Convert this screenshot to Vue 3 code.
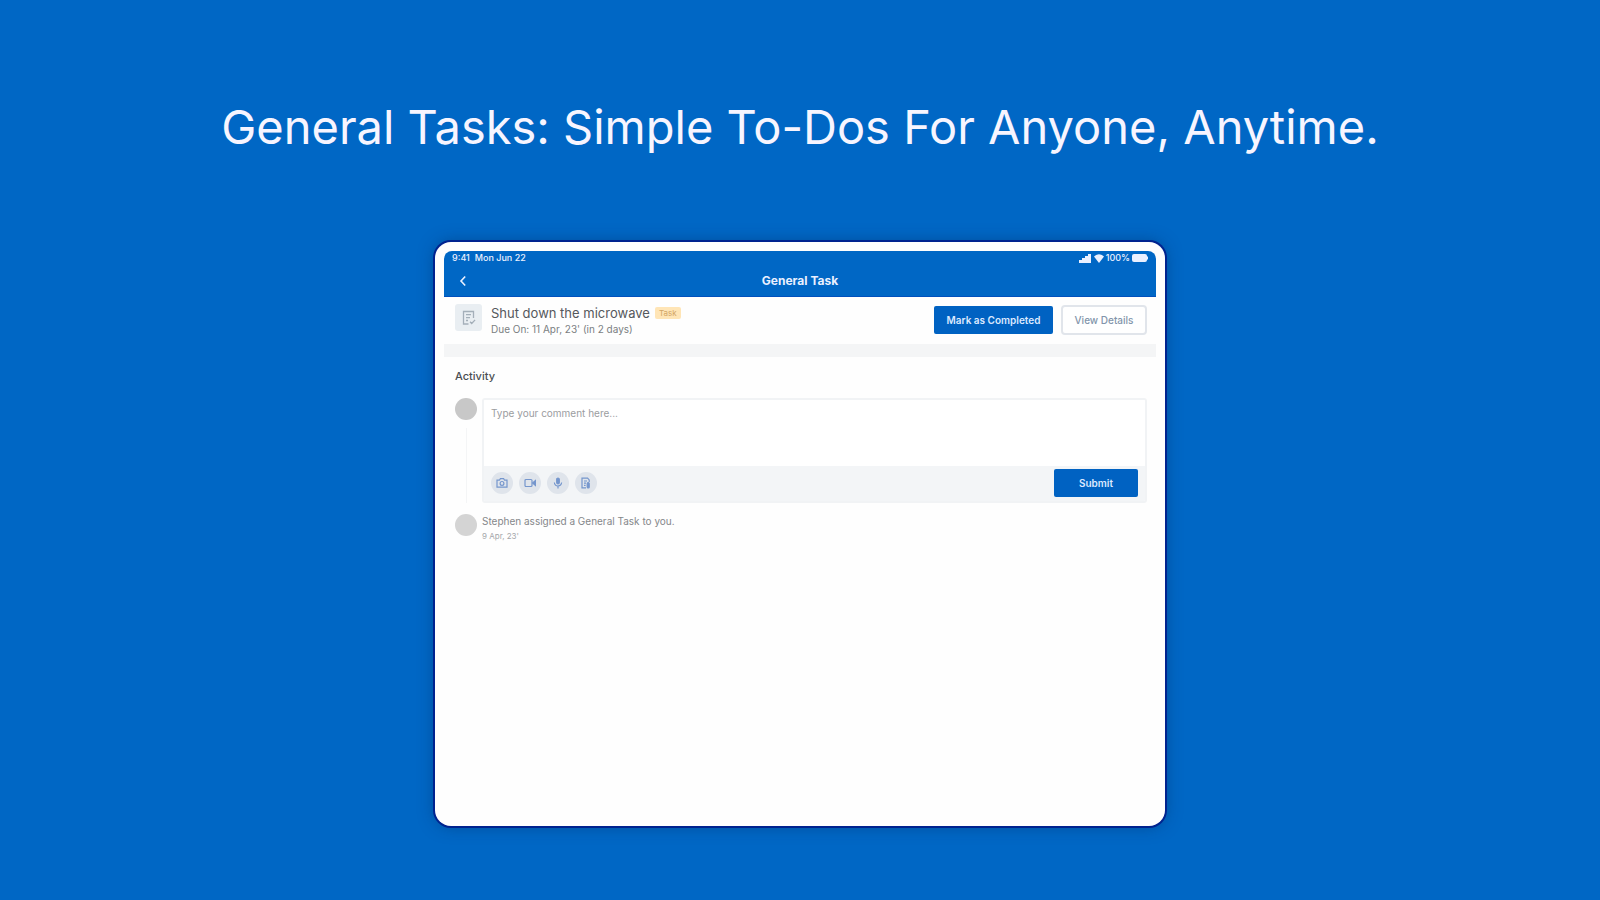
<script setup>
import { ref } from 'vue'

const comment = ref('')
const attachments = [
  { name: 'Add photo', icon: 'camera' },
  { name: 'Add video', icon: 'video' },
  { name: 'Record audio', icon: 'mic' },
  { name: 'Attach file', icon: 'file' },
]
</script>

<template>
  <main class="page">
    <h1 class="headline">General Tasks: Simple To-Dos For Anyone, Anytime.</h1>

    <section class="tablet">
      <div class="screen">
        <header class="top">
          <div class="status">
            <span class="status-left"><span>9:41</span><span>Mon Jun 22</span></span>
            <span class="status-right">
              <svg width="13" height="9" viewBox="0 0 13 9" fill="currentColor" aria-hidden="true">
                <path d="M0 6h3v3H0zM3 4h3v5H3zM6 2h3v7H6zM9 0h3v9H9z" />
              </svg>
              <svg width="10" height="9" viewBox="0 0 10 9" fill="currentColor" aria-hidden="true">
                <path d="M0 2.4Q5-2 10 2.4L5 9z" />
              </svg>
              <span>100%</span>
              <svg width="16" height="8" viewBox="0 0 16 8" fill="currentColor" aria-hidden="true">
                <rect width="15" height="8" rx="2" />
                <rect x="15" y="2.5" width="1" height="3" />
              </svg>
            </span>
          </div>
          <div class="nav">
            <button class="back" type="button" aria-label="Back">
              <svg width="8" height="12" viewBox="0 0 8 12" fill="none" stroke="currentColor" stroke-width="1.6" aria-hidden="true">
                <path d="M6.2 1.5 2 6l4.2 4.5" />
              </svg>
            </button>
            <h2>General Task</h2>
          </div>
        </header>

        <div class="task">
          <span class="task-icon">
            <svg width="14" height="16" viewBox="0 0 14 16" fill="none" stroke="currentColor" stroke-width="1.3" aria-hidden="true">
              <path d="M6.5 14H1.5V1.5h10V8M4 4.7h5M4 7.7h4M4 10.5h2M8 11.8l1.7 1.7 3.4-3.6" />
            </svg>
          </span>
          <div class="task-text">
            <div class="task-line">
              <h3>Shut down the microwave</h3>
              <span class="badge">Task</span>
            </div>
            <p>Due On: 11 Apr, 23' (in 2 days)</p>
          </div>
          <button class="primary complete" type="button">Mark as Completed</button>
          <button class="details" type="button">View Details</button>
        </div>

        <div class="activity">
          <h3>Activity</h3>
          <div class="entry">
            <span class="rail"><span class="avatar"></span><span class="line"></span></span>
            <form class="comment" @submit.prevent>
              <textarea v-model="comment" aria-label="Comment" placeholder="Type your comment here..."></textarea>
              <div class="tools">
                <button v-for="item in attachments" :key="item.icon" class="tool" type="button" :aria-label="item.name">
                  <svg width="12" height="12" viewBox="0 0 12 12" fill="none" stroke="currentColor" stroke-width="1.2" aria-hidden="true">
                    <g v-if="item.icon === 'camera'">
                      <path d="M1 3.2h2.4l1-1.6h3.2l1 1.6H11v7H1z" />
                      <circle cx="6" cy="6.4" r="1.9" />
                    </g>
                    <g v-else-if="item.icon === 'video'">
                      <rect x="1" y="2.5" width="7" height="7" rx="1" />
                      <path d="M8.6 6 11.4 3.6v4.8z" fill="currentColor" />
                    </g>
                    <g v-else-if="item.icon === 'mic'">
                      <rect x="4.7" y="1" width="2.6" height="5.8" rx="1.3" fill="currentColor" />
                      <path d="M2.4 5.6a3.6 3.4 0 0 0 7.2 0M6 9v2.4" />
                    </g>
                    <g v-else>
                      <path d="M6 10.8H2V1.2h5.6l1.6 1.7v2M4 4h3M4 6.2h2M4 8.4h1.6" />
                      <path d="M7.2 10V6.6q0-1 1-1t1 1v3.6q0 .8-1 .8t-1-1" fill="currentColor" />
                    </g>
                  </svg>
                </button>
                <button class="primary submit" type="submit">Submit</button>
              </div>
            </form>
          </div>
          <div class="entry log">
            <span class="avatar light"></span>
            <div>
              <p class="log-text">Stephen assigned a General Task to you.</p>
              <p class="log-date">9 Apr, 23'</p>
            </div>
          </div>
        </div>
      </div>
    </section>
  </main>
</template>

<style>
body {
  margin: 0;
  background: #0067c5;
}
</style>

<style scoped>
* {
  box-sizing: border-box;
}
.page {
  display: flex;
  flex-direction: column;
  align-items: center;
  min-height: 100vh;
  padding: 97px 24px 48px;
  background: #0067c5;
  font-family: Inter, "Liberation Sans", sans-serif;
}
h1, h2, h3, p {
  margin: 0;
}
button {
  padding: 0;
  border: 0;
  font: inherit;
  cursor: pointer;
}
.headline {
  color: #f7f5ff;
  font-size: 47px;
  font-weight: 400;
  line-height: 60px;
  text-align: center;
}
.tablet {
  width: 100%;
  max-width: 730px;
  aspect-ratio: 5 / 4;
  margin-top: 85px;
  padding: 9px;
  border-radius: 16px;
  background: #fefefe;
  box-shadow: 0 0 0 2px #00238f, 0 0 16px rgba(0, 45, 100, 0.5);
}
.screen {
  overflow: hidden;
  border-radius: 8px 8px 0 0;
}
.top {
  height: 46px;
  background: #0067c5;
  border-bottom: 1px solid #0050bd;
  color: #eaf0ff;
}
.status {
  display: flex;
  justify-content: space-between;
  padding: 0 8px;
  font-size: 9px;
  font-weight: 500;
  line-height: 14px;
}
.status-left {
  display: flex;
  gap: 5px;
}
.status-right {
  display: flex;
  align-items: center;
  gap: 2px;
}
.nav {
  display: grid;
  grid-template-columns: 38px 1fr 38px;
  align-items: center;
  height: 32px;
}
.back {
  display: grid;
  place-items: center;
  height: 24px;
  background: none;
  color: inherit;
}
.nav h2 {
  font-size: 12px;
  font-weight: 700;
  line-height: 16px;
  text-align: center;
}
.task {
  display: flex;
  align-items: flex-start;
  gap: 8px;
  padding: 7px 9px 7px 11px;
  border-bottom: 13px solid #f4f5f6;
}
.task-icon {
  display: grid;
  place-items: center;
  width: 27px;
  height: 27px;
  border-radius: 3px;
  background: #e9eef2;
  color: #a4afb9;
}
.task-text {
  flex: 1;
  padding-left: 1px;
}
.task-line {
  display: flex;
  align-items: center;
  gap: 5px;
}
.task h3 {
  color: #55585c;
  font-size: 13px;
  font-weight: 400;
  line-height: 18px;
}
.task p {
  color: #7b7e82;
  font-size: 10px;
  line-height: 15px;
}
.badge {
  padding: 0 4px;
  border-radius: 2px;
  background: #ffe5b6;
  color: #d3a566;
  font-size: 8px;
  line-height: 12px;
}
.primary {
  border-radius: 2px;
  background: #0062c2;
  color: #dce9ff;
  font-size: 10px;
  font-weight: 600;
}
.complete {
  width: 119px;
  height: 28px;
  margin-top: 2px;
}
.details {
  width: 86px;
  height: 30px;
  margin-top: 1px;
  border: 2px solid #e1e5eb;
  border-radius: 4px;
  background: #fff;
  color: #8295ab;
  font-size: 10px;
  font-weight: 500;
}
.activity {
  padding: 11px 9px 0 11px;
}
.activity h3 {
  margin-bottom: 14px;
  color: #4b4e52;
  font-size: 11px;
  font-weight: 500;
  line-height: 16px;
}
.entry {
  display: flex;
  gap: 5px;
}
.rail {
  display: flex;
  flex-direction: column;
  align-items: center;
}
.avatar {
  flex: none;
  width: 22px;
  height: 22px;
  border-radius: 50%;
  background: #c8c8c8;
}
.light {
  background: #d4d4d4;
}
.line {
  flex: 1;
  width: 1px;
  margin-top: 8px;
  background: #f4f5f6;
}
.comment {
  flex: 1;
  overflow: hidden;
  border: 2px solid #f1f3f5;
  border-radius: 3px;
}
.comment textarea {
  display: block;
  width: 100%;
  height: 66px;
  padding: 6px 7px;
  border: 0;
  outline: 0;
  resize: none;
  background: #fff;
  font: 10px/14px Inter, "Liberation Sans", sans-serif;
}
.comment textarea::placeholder {
  color: #9b9d9f;
  opacity: 1;
}
.tools {
  display: flex;
  align-items: center;
  gap: 6px;
  padding: 3px 7px 4px;
  background: #f3f5f7;
}
.tool {
  display: grid;
  place-items: center;
  width: 22px;
  height: 22px;
  border-radius: 50%;
  background: #dfe4eb;
  color: #7596cd;
}
.submit {
  width: 84px;
  height: 28px;
  margin-left: auto;
}
.log {
  margin-top: 11px;
}
.log-text {
  color: #85878a;
  font-size: 10px;
  line-height: 15px;
}
.log-date {
  color: #a5a7aa;
  font-size: 8px;
  line-height: 14px;
}
</style>
